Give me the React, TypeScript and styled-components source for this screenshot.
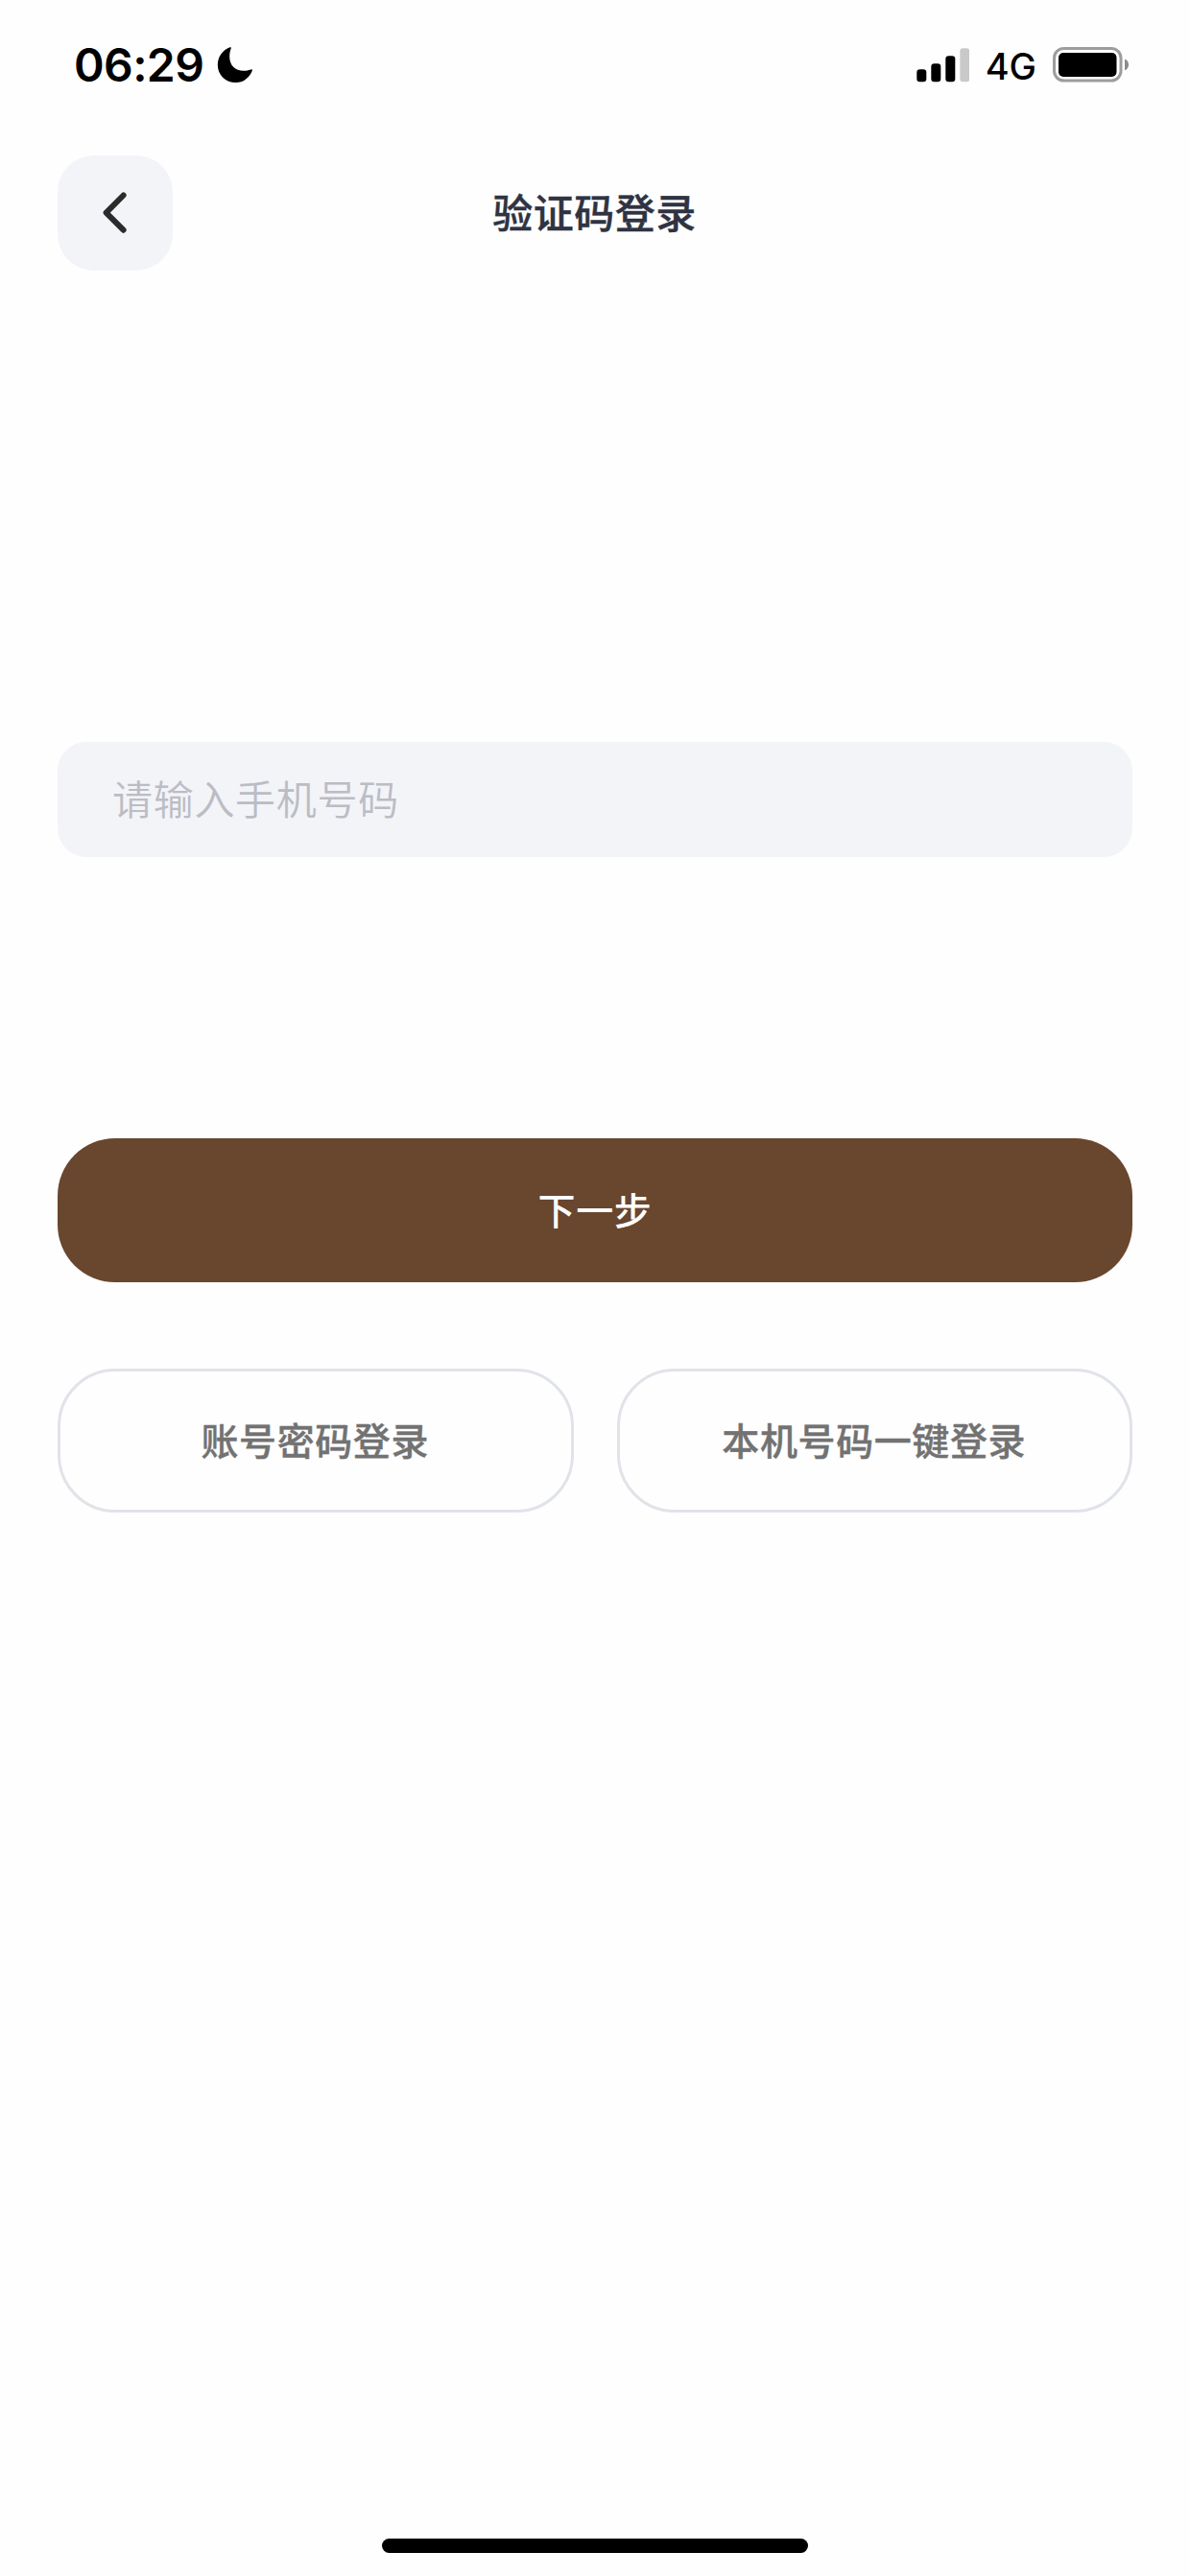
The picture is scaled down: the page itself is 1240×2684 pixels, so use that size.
import React from 'react';
import styled, { createGlobalStyle } from 'styled-components';

const GlobalStyle = createGlobalStyle`
  * { box-sizing: border-box; }
  body { margin: 0; background: #fefefe; }
  button, input { font-family: inherit; }
`;

const Screen = styled.div`
  display: flex;
  flex-direction: column;
  width: 1240px;
  height: 2684px;
  padding: 0 60px 24px;
  background: #fefefe;
  font-family: Inter, 'Noto Sans CJK SC', sans-serif;
`;

const StatusBar = styled.header`
  display: flex;
  justify-content: space-between;
  height: 162px;
  padding: 39px 3px 0 17px;
  color: #000;
`;

const StatusGroup = styled.div<{ $gap: number }>`
  display: flex;
  align-items: center;
  gap: ${({ $gap }) => $gap}px;
  height: 58px;
`;

const Clock = styled.span`
  font-size: 48px;
  font-weight: 600;
  line-height: 58px;
  letter-spacing: -0.6px;
`;

const Network = styled.span`
  font-size: 38px;
  font-weight: 500;
  line-height: 58px;
  padding-top: 1px;
`;

const NavBar = styled.nav`
  display: grid;
  grid-template-columns: 120px 1fr 120px;
  align-items: center;
  height: 120px;
`;

const BackButton = styled.button`
  display: flex;
  align-items: center;
  justify-content: center;
  width: 120px;
  height: 120px;
  padding: 0;
  border: 0;
  border-radius: 38px;
  background: #f2f4f8;
`;

const Title = styled.h1`
  margin: 0;
  padding: 2px 1px 0 0;
  color: #2f3342;
  font-size: 42px;
  font-weight: 500;
  line-height: 60px;
  letter-spacing: 0.5px;
  text-align: center;
  -webkit-text-stroke: 0.4px currentColor;
`;

const Form = styled.form`
  display: flex;
  flex-direction: column;
  margin-top: 491px;
`;

const PhoneInput = styled.input`
  height: 120px;
  padding: 0 57px;
  border: 0;
  border-radius: 30px;
  outline: 0;
  background: #f2f4f8;
  font-size: 42px;
  font-weight: 350;
  letter-spacing: 0.7px;
  &::placeholder { color: #bcbcc4; opacity: 1; }
`;

const Button = styled.button<{ $primary?: boolean }>`
  flex: 1;
  height: 150px;
  padding: ${({ $primary }) => ($primary ? '0 0 4px' : '0 1px 4px 0')};
  border: ${({ $primary }) => ($primary ? '0' : '3px solid #e0e3e8')};
  border-radius: 60px;
  background: ${({ $primary }) => ($primary ? '#69462e' : 'transparent')};
  color: ${({ $primary }) => ($primary ? '#fff' : '#727272')};
  font-size: 39px;
  font-weight: 500;
  letter-spacing: 0.6px;
  -webkit-text-stroke: ${({ $primary }) => ($primary ? '0' : '0.4px')} currentColor;
`;

const PrimaryRow = styled.div`
  display: flex;
  margin-top: 293px;
`;

const AlternativeRow = styled.div`
  display: flex;
  gap: 45px;
  margin-top: 90px;
`;

const HomeIndicator = styled.div`
  width: 444px;
  height: 15px;
  margin: auto auto 0;
  border-radius: 8px;
  background: #000;
`;

const Moon = () => (
  <svg width="38" height="38" viewBox="0 0 38 38">
    <path d="M14.8 1.2C15.2.3 14.6-.1 13.6.3A19.3 19.3 0 0 0 .8 18.2C.8 29 9 37 19.8 37c7.600 0 14-4.700 17-12.200.4-1.200-.2-1.800-1.400-1.400C32.800 24.300 30.700 24.800 28 24.800c-9 0-14.800-5.800-14.800-14.800 0-3.400.5-6.100 1.600-8.800Z" fill="#000" />
  </svg>
);

const bars = [
  { x: 0, h: 13 },
  { x: 15, h: 19 },
  { x: 30, h: 27 },
  { x: 45, h: 35 },
];

const Signal = () => (
  <svg width="55" height="36" viewBox="0 0 55 36">
    {bars.map(({ x, h }, i) => (
      <rect key={x} x={x + 0.3} y={35.2 - h} width="10" height={h} rx="3.2" fill={i === 3 ? '#c9c9c9' : '#000'} />
    ))}
  </svg>
);

const Battery = () => (
  <svg width="80" height="38" viewBox="0 0 80 38">
    <rect x="1.5" y="1.5" width="69.5" height="33.6" rx="10" fill="none" stroke="#9d9d9d" strokeWidth="3" />
    <rect x="6" y="6" width="60.5" height="25" rx="5" fill="#000" />
    <path d="M75 12.500c2.500 1 4 3.300 4 5.900s-1.500 4.900-4 5.900Z" fill="#8b8b8b" />
  </svg>
);

const Chevron = () => (
  <svg width="44" height="44" viewBox="0 0 44 44" fill="none" stroke="#2b2b2b" strokeWidth="6" strokeLinecap="round" strokeLinejoin="round">
    <path d="M30.600 3.500 12.600 21.600l18 18.100" />
  </svg>
);

export default function App() {
  return (
    <>
      <GlobalStyle />
      <Screen lang="zh-CN">
        <StatusBar>
          <StatusGroup $gap={14}>
            <Clock>06:29</Clock>
            <Moon />
          </StatusGroup>
          <StatusGroup $gap={17}>
            <Signal />
            <Network>4G</Network>
            <Battery />
          </StatusGroup>
        </StatusBar>
        <NavBar>
          <BackButton type="button" aria-label="返回">
            <Chevron />
          </BackButton>
          <Title>验证码登录</Title>
        </NavBar>
        <Form>
          <PhoneInput type="tel" placeholder="请输入手机号码" />
          <PrimaryRow>
            <Button type="button" $primary>下一步</Button>
          </PrimaryRow>
          <AlternativeRow>
            <Button type="button">账号密码登录</Button>
            <Button type="button">本机号码一键登录</Button>
          </AlternativeRow>
        </Form>
        <HomeIndicator />
      </Screen>
    </>
  );
}
